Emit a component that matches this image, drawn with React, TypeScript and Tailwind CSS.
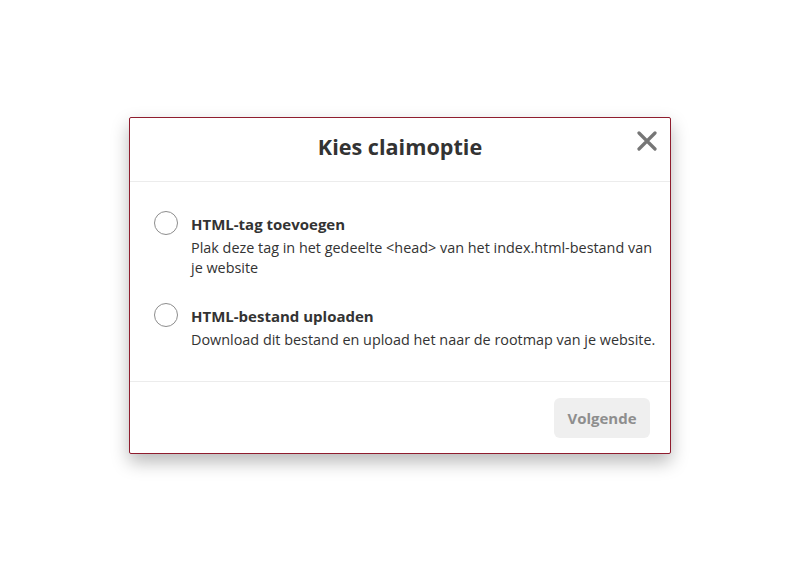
const options = [
  {
    title: 'HTML-tag toevoegen',
    desc: 'Plak deze tag in het gedeelte <head> van het index.html-bestand van je website',
  },
  {
    title: 'HTML-bestand uploaden',
    desc: 'Download dit bestand en upload het naar de rootmap van je website.',
  },
];

const CloseIcon = () => (
  <svg width="20" height="20" viewBox="0 0 20 20" fill="none">
    <path d="M2 2L18 18M18 2L2 18" stroke="#767676" strokeWidth="3.2" strokeLinecap="round" />
  </svg>
);

export default function App() {
  return (
    <div
      className="flex h-[571px] w-full items-center justify-center bg-white text-[#333]"
      style={{ fontFamily: '"Open Sans", "Noto Sans", sans-serif' }}
    >
      <div className="flex h-[337px] w-[542px] flex-col rounded-[2px] border border-[#8f1d2e] bg-white shadow-[0_8px_18px_rgba(0,0,0,0.28)]">
        {/* header */}
        <div className="relative flex h-[64px] shrink-0 items-center justify-center border-b border-[#ececec]">
          <h1 className="-mt-[5px] text-[21.6px] font-bold leading-none text-[#333]">Kies claimoptie</h1>
          <button className="absolute right-[13px] top-[13px] p-0">
            <CloseIcon />
          </button>
        </div>

        {/* body */}
        <div className="flex flex-1 flex-col gap-[28px] border-b border-[#ececec] pl-6 pr-[13px] pt-[32px]">
          {options.map((o) => (
            <label key={o.title} className="flex items-start gap-[13px]">
              <span className="-mt-[3px] h-6 w-6 shrink-0 rounded-full border border-[#8d8d8d] bg-white" />
              <span className="flex flex-col">
                <span className="text-[15px] font-bold leading-5 text-[#333]">{o.title}</span>
                <span className="mt-[4px] text-[14.4px] leading-5 text-[#333]">{o.desc}</span>
              </span>
            </label>
          ))}
        </div>

        {/* footer */}
        <div className="flex h-[71px] shrink-0 items-start justify-end pr-5 pt-4">
          <button className="h-10 w-24 rounded-md bg-[#efefef] text-[15px] font-bold text-[#8e8e8e]">
            Volgende
          </button>
        </div>
      </div>
    </div>
  );
}
